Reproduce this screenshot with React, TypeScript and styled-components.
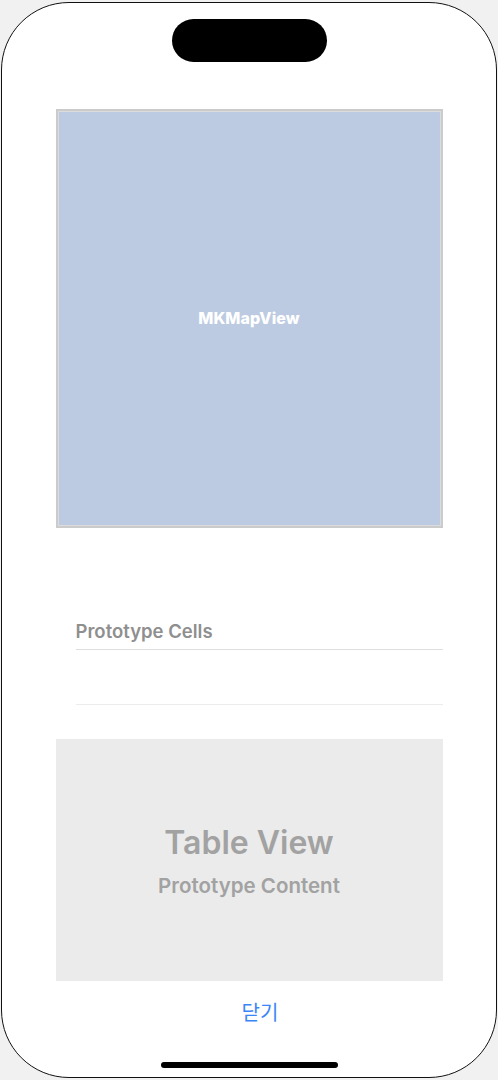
import React from "react";
import styled, { createGlobalStyle } from "styled-components";

const Global = createGlobalStyle`
  html, body { margin: 0; padding: 0; background: #f1f1f1; }
  body { font-family: Inter, "Noto Sans", "Noto Sans CJK KR", sans-serif; }
`;

const Stage = styled.div`
  width: 498px;
  height: 1080px;
  display: flex;
  justify-content: center;
  padding-top: 2px;
  box-sizing: border-box;
`;

const Phone = styled.div`
  width: 496px;
  height: 1076px;
  box-sizing: border-box;
  border: 1.5px solid #111;
  border-radius: 68px;
  background: #fff;
  display: flex;
  flex-direction: column;
  align-items: center;
  overflow: hidden;
`;

const Island = styled.div`
  width: 155px;
  height: 43px;
  border-radius: 22px;
  background: #000;
  margin-top: 15.5px;
  flex-shrink: 0;
`;

const MapView = styled.div`
  width: 387px;
  height: 419px;
  margin-top: 47px;
  box-sizing: border-box;
  border: 2px solid #cbcbcb;
  box-shadow: inset 0 0 0 1px #dcdcdc;
  background: #bccbe1;
  display: flex;
  align-items: center;
  justify-content: center;
  flex-shrink: 0;
`;

const MapLabel = styled.span`
  color: #fff;
  font-family: Inter, sans-serif;
  font-weight: 800;
  font-size: 16px;
  letter-spacing: 0.1px;
`;

const Section = styled.div`
  width: 387px;
  margin-top: 90px;
  padding-left: 20px;
  box-sizing: border-box;
  display: flex;
  flex-direction: column;
  flex-shrink: 0;
`;

const SectionHeader = styled.div`
  height: 32px;
  display: flex;
  align-items: flex-end;
  padding-bottom: 7px;
  box-sizing: border-box;
  border-bottom: 1px solid #dedede;
  color: #8f8f8f;
  font-family: Inter, sans-serif;
  font-weight: 600;
  font-size: 18.5px;
  line-height: 22px;
`;

const Cell = styled.div`
  height: 54px;
  border-bottom: 1px solid #ececec;
`;

const TablePlaceholder = styled.div`
  width: 387px;
  height: 242px;
  margin-top: 34px;
  background: #ebebeb;
  display: flex;
  flex-direction: column;
  align-items: center;
  justify-content: center;
  gap: 13px;
  padding-top: 4px;
  box-sizing: border-box;
  flex-shrink: 0;
`;

const PlaceholderTitle = styled.div`
  color: #a2a2a2;
  font-family: Inter, sans-serif;
  font-weight: 600;
  font-size: 32px;
  line-height: 36px;
`;

const PlaceholderSub = styled.div`
  color: #a2a2a2;
  font-family: Inter, sans-serif;
  font-weight: 600;
  font-size: 20.5px;
  line-height: 24px;
`;

const CloseButton = styled.button`
  margin-top: 16px;
  margin-left: 22px;
  border: none;
  background: none;
  padding: 0;
  color: #3b86f7;
  font-family: "Noto Sans CJK KR", sans-serif;
  font-size: 20px;
  line-height: 29px;
  cursor: pointer;
`;

const HomeIndicator = styled.div`
  width: 177px;
  height: 6px;
  border-radius: 3px;
  background: #000;
  margin-top: auto;
  margin-bottom: 9px;
  flex-shrink: 0;
`;

export default function App() {
  return (
    <>
      <Global />
      <Stage>
        <Phone>
          <Island />
          <MapView>
            <MapLabel>MKMapView</MapLabel>
          </MapView>
          <Section>
            <SectionHeader>Prototype Cells</SectionHeader>
            <Cell />
          </Section>
          <TablePlaceholder>
            <PlaceholderTitle>Table View</PlaceholderTitle>
            <PlaceholderSub>Prototype Content</PlaceholderSub>
          </TablePlaceholder>
          <CloseButton>닫기</CloseButton>
          <HomeIndicator />
        </Phone>
      </Stage>
    </>
  );
}
